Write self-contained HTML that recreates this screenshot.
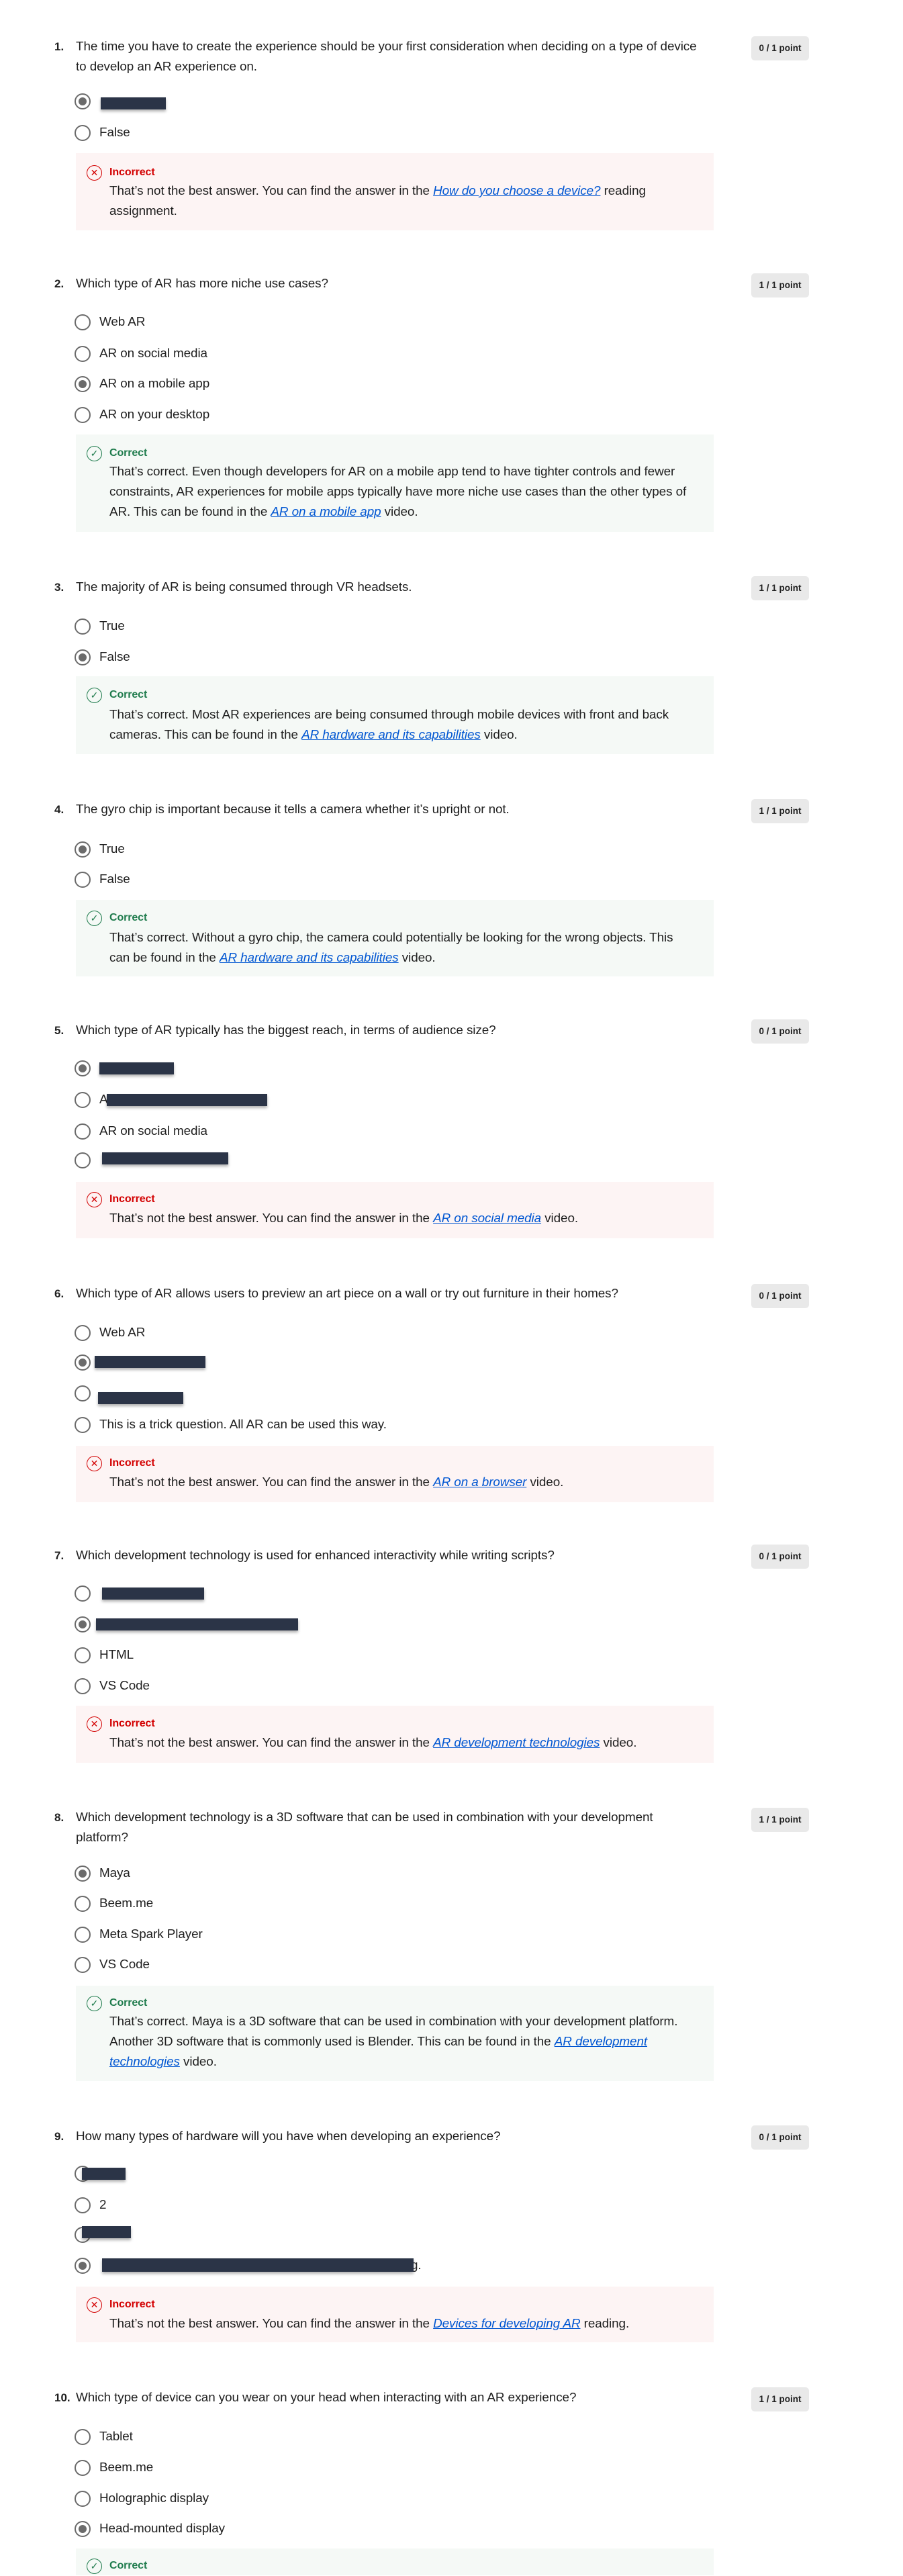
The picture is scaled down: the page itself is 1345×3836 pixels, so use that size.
<!DOCTYPE html>
<html><head><meta charset="utf-8"><style>
*{margin:0;padding:0;box-sizing:border-box}
body{width:1345px;height:3827px;position:relative;background:#fff;font-family:"Liberation Sans",sans-serif;color:#1f1f1f;overflow:hidden}
.t{position:absolute;line-height:30px;height:30px;white-space:nowrap;font-size:18.9px;letter-spacing:-0.1px}
.n{position:absolute;left:81px;line-height:30px;font-weight:bold;font-size:17px}
.q{left:113px}
.o{left:148px}
.fb{left:163px}
.badge{position:absolute;left:1119px;width:86px;height:36px;background:#e9e9e9;border-radius:5px;font-weight:bold;font-size:13.5px;line-height:36px;text-align:center;color:#1f1f1f}
.r{position:absolute;left:111px;width:24px;height:24px;border:2.5px solid #6b6b6b;border-radius:50%;background:#fff}
.r.s::after{content:"";position:absolute;left:3.5px;top:3.5px;width:12px;height:12px;border-radius:50%;background:#6b6b6b}
.box{position:absolute;left:113px;width:950px}
.bad{background:#fdf4f4}
.good{background:#f5f9f6}
.ic{position:absolute;left:129px;width:23px;height:23px;border-radius:50%;font-size:14px;line-height:20px;text-align:center}
.ix{border:1.5px solid #d30001;color:#d30001}
.iv{border:1.5px solid #1e7b4c;color:#1e7b4c}
.lx{color:#d30001;font-weight:bold;font-size:16px}
.lv{color:#1e7b4c;font-weight:bold;font-size:16px}
a{color:#0056d2;font-style:italic;text-decoration:underline}
.bar{position:absolute;height:18px;background:#2b3447;box-shadow:0 3px 4px rgba(0,0,0,.3)}
</style></head><body>

<!-- Q1 -->
<div class="n" style="top:55px">1.</div>
<div class="t q" style="top:55px">The time you have to create the experience should be your first consideration when deciding on a type of device</div>
<div class="t q" style="top:85px">to develop an AR experience on.</div>
<div class="badge" style="top:54px">0 / 1 point</div>
<div class="r s" style="top:139px"></div><div class="bar" style="left:150px;width:97px;top:145px"></div>
<div class="r" style="top:186px"></div><div class="t o" style="top:183px">False</div>
<div class="box bad" style="top:228px;height:115px"></div>
<div class="ic ix" style="top:246px">✕</div><div class="t fb lx" style="top:242px">Incorrect</div>
<div class="t fb" style="top:270px">That’s not the best answer. You can find the answer in the <a>How do you choose a device?</a> reading</div>
<div class="t fb" style="top:300px">assignment.</div>

<!-- Q2 -->
<div class="n" style="top:408px">2.</div>
<div class="t q" style="top:408px">Which type of AR has more niche use cases?</div>
<div class="badge" style="top:407px">1 / 1 point</div>
<div class="r" style="top:468px"></div><div class="t o" style="top:465px">Web AR</div>
<div class="r" style="top:515px"></div><div class="t o" style="top:512px">AR on social media</div>
<div class="r s" style="top:560px"></div><div class="t o" style="top:557px">AR on a mobile app</div>
<div class="r" style="top:606px"></div><div class="t o" style="top:603px">AR on your desktop</div>
<div class="box good" style="top:647px;height:145px"></div>
<div class="ic iv" style="top:664px">✓</div><div class="t fb lv" style="top:660px">Correct</div>
<div class="t fb" style="top:688px">That’s correct. Even though developers for AR on a mobile app tend to have tighter controls and fewer</div>
<div class="t fb" style="top:718px">constraints, AR experiences for mobile apps typically have more niche use cases than the other types of</div>
<div class="t fb" style="top:748px">AR. This can be found in the <a>AR on a mobile app</a> video.</div>

<!-- Q3 -->
<div class="n" style="top:860px">3.</div>
<div class="t q" style="top:860px">The majority of AR is being consumed through VR headsets.</div>
<div class="badge" style="top:858px">1 / 1 point</div>
<div class="r" style="top:921px"></div><div class="t o" style="top:918px">True</div>
<div class="r s" style="top:967px"></div><div class="t o" style="top:964px">False</div>
<div class="box good" style="top:1007px;height:116px"></div>
<div class="ic iv" style="top:1024px">✓</div><div class="t fb lv" style="top:1020px">Correct</div>
<div class="t fb" style="top:1050px">That’s correct. Most AR experiences are being consumed through mobile devices with front and back</div>
<div class="t fb" style="top:1080px">cameras. This can be found in the <a>AR hardware and its capabilities</a> video.</div>

<!-- Q4 -->
<div class="n" style="top:1191px">4.</div>
<div class="t q" style="top:1191px">The gyro chip is important because it tells a camera whether it’s upright or not.</div>
<div class="badge" style="top:1190px">1 / 1 point</div>
<div class="r s" style="top:1253px"></div><div class="t o" style="top:1250px">True</div>
<div class="r" style="top:1298px"></div><div class="t o" style="top:1295px">False</div>
<div class="box good" style="top:1340px;height:114px"></div>
<div class="ic iv" style="top:1356px">✓</div><div class="t fb lv" style="top:1352px">Correct</div>
<div class="t fb" style="top:1382px">That’s correct. Without a gyro chip, the camera could potentially be looking for the wrong objects. This</div>
<div class="t fb" style="top:1412px">can be found in the <a>AR hardware and its capabilities</a> video.</div>

<!-- Q5 -->
<div class="n" style="top:1520px">5.</div>
<div class="t q" style="top:1520px">Which type of AR typically has the biggest reach, in terms of audience size?</div>
<div class="badge" style="top:1518px">0 / 1 point</div>
<div class="r s" style="top:1579px"></div><div class="bar" style="left:148px;width:111px;top:1582px"></div>
<div class="r" style="top:1626px"></div><div class="t o" style="top:1623px">A</div><div class="bar" style="left:159px;width:239px;top:1629px"></div>
<div class="r" style="top:1673px"></div><div class="t o" style="top:1670px">AR on social media</div>
<div class="r" style="top:1716px"></div><div class="bar" style="left:152px;width:188px;top:1716px"></div>
<div class="box bad" style="top:1760px;height:84px"></div>
<div class="ic ix" style="top:1775px">✕</div><div class="t fb lx" style="top:1771px">Incorrect</div>
<div class="t fb" style="top:1800px">That’s not the best answer. You can find the answer in the <a>AR on social media</a> video.</div>

<!-- Q6 -->
<div class="n" style="top:1912px">6.</div>
<div class="t q" style="top:1912px">Which type of AR allows users to preview an art piece on a wall or try out furniture in their homes?</div>
<div class="badge" style="top:1912px">0 / 1 point</div>
<div class="r" style="top:1973px"></div><div class="t o" style="top:1970px">Web AR</div>
<div class="r s" style="top:2017px"></div><div class="bar" style="left:141px;width:165px;top:2019px"></div>
<div class="r" style="top:2063px"></div><div class="bar" style="left:146px;width:127px;top:2073px"></div>
<div class="r" style="top:2110px"></div><div class="t o" style="top:2107px">This is a trick question. All AR can be used this way.</div>
<div class="box bad" style="top:2153px;height:84px"></div>
<div class="ic ix" style="top:2168px">✕</div><div class="t fb lx" style="top:2164px">Incorrect</div>
<div class="t fb" style="top:2193px">That’s not the best answer. You can find the answer in the <a>AR on a browser</a> video.</div>

<!-- Q7 -->
<div class="n" style="top:2302px">7.</div>
<div class="t q" style="top:2302px">Which development technology is used for enhanced interactivity while writing scripts?</div>
<div class="badge" style="top:2300px">0 / 1 point</div>
<div class="r" style="top:2361px"></div><div class="bar" style="left:152px;width:152px;top:2364px"></div>
<div class="r s" style="top:2407px"></div><div class="bar" style="left:143px;width:301px;top:2410px"></div>
<div class="r" style="top:2453px"></div><div class="t o" style="top:2450px">HTML</div>
<div class="r" style="top:2499px"></div><div class="t o" style="top:2496px">VS Code</div>
<div class="box bad" style="top:2540px;height:85px"></div>
<div class="ic ix" style="top:2556px">✕</div><div class="t fb lx" style="top:2552px">Incorrect</div>
<div class="t fb" style="top:2581px">That’s not the best answer. You can find the answer in the <a>AR development technologies</a> video.</div>

<!-- Q8 -->
<div class="n" style="top:2692px">8.</div>
<div class="t q" style="top:2692px">Which development technology is a 3D software that can be used in combination with your development</div>
<div class="t q" style="top:2722px">platform?</div>
<div class="badge" style="top:2692px">1 / 1 point</div>
<div class="r s" style="top:2778px"></div><div class="t o" style="top:2775px">Maya</div>
<div class="r" style="top:2823px"></div><div class="t o" style="top:2820px">Beem.me</div>
<div class="r" style="top:2869px"></div><div class="t o" style="top:2866px">Meta Spark Player</div>
<div class="r" style="top:2914px"></div><div class="t o" style="top:2911px">VS Code</div>
<div class="box good" style="top:2957px;height:142px"></div>
<div class="ic iv" style="top:2972px">✓</div><div class="t fb lv" style="top:2968px">Correct</div>
<div class="t fb" style="top:2996px">That’s correct. Maya is a 3D software that can be used in combination with your development platform.</div>
<div class="t fb" style="top:3026px">Another 3D software that is commonly used is Blender. This can be found in the <a>AR development</a></div>
<div class="t fb" style="top:3056px"><a>technologies</a> video.</div>

<!-- Q9 -->
<div class="n" style="top:3167px">9.</div>
<div class="t q" style="top:3167px">How many types of hardware will you have when developing an experience?</div>
<div class="badge" style="top:3165px">0 / 1 point</div>
<div class="r" style="top:3225px"></div><div class="bar" style="left:122px;width:65px;top:3228px"></div>
<div class="r" style="top:3272px"></div><div class="t o" style="top:3269px">2</div>
<div class="r" style="top:3316px"></div><div class="bar" style="left:122px;width:73px;top:3315px"></div>
<div class="r s" style="top:3362px"></div><div class="t" style="left:612px;top:3359px">g.</div><div class="bar" style="left:152px;width:464px;top:3363px;height:20px"></div>
<div class="box bad" style="top:3405px;height:83px"></div>
<div class="ic ix" style="top:3421px">✕</div><div class="t fb lx" style="top:3417px">Incorrect</div>
<div class="t fb" style="top:3446px">That’s not the best answer. You can find the answer in the <a>Devices for developing AR</a> reading.</div>

<!-- Q10 -->
<div class="n" style="top:3556px">10.</div>
<div class="t q" style="top:3556px">Which type of device can you wear on your head when interacting with an AR experience?</div>
<div class="badge" style="top:3555px">1 / 1 point</div>
<div class="r" style="top:3617px"></div><div class="t o" style="top:3614px">Tablet</div>
<div class="r" style="top:3663px"></div><div class="t o" style="top:3660px">Beem.me</div>
<div class="r" style="top:3709px"></div><div class="t o" style="top:3706px">Holographic display</div>
<div class="r s" style="top:3754px"></div><div class="t o" style="top:3751px">Head-mounted display</div>
<div class="box good" style="top:3795px;height:40px"></div>
<div class="ic iv" style="top:3810px">✓</div><div class="t fb lv" style="top:3806px">Correct</div>

</body></html>
